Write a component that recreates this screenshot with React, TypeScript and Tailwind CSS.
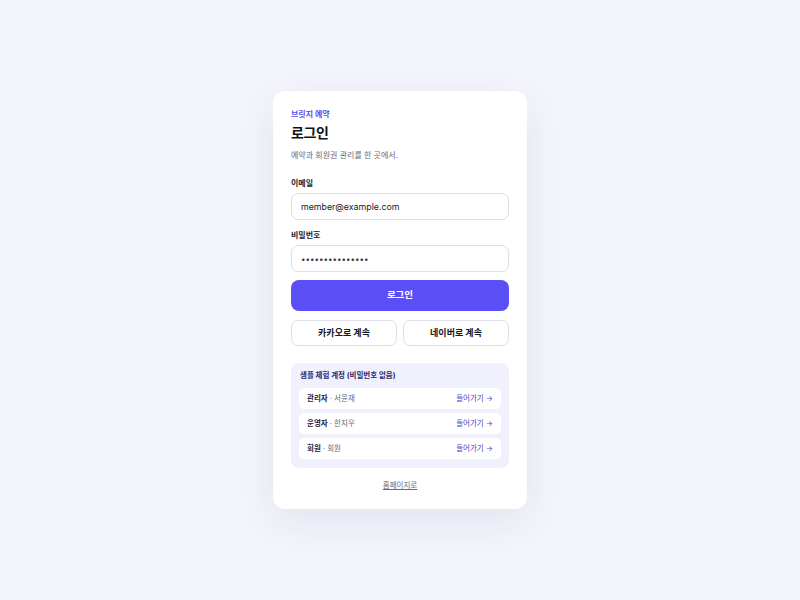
import { useState } from "react"

const font = { fontFamily: '"Inter", "Noto Sans CJK KR", sans-serif' }

const samples = [
  { role: "관리자", name: "서윤재" },
  { role: "운영자", name: "한지우" },
  { role: "회원", name: "회원" },
]

export default function App() {
  const [email, setEmail] = useState("member@example.com")
  const [password, setPassword] = useState("password1234567")

  return (
    <div className="min-h-screen w-full bg-[#f4f4fb] flex items-center justify-center" style={font}>
      <div className="w-[254px] bg-white rounded-[12px] shadow-[0_12px_40px_rgba(40,40,110,0.08)] px-[18px] pt-[18px] pb-[17px]">
        {/* Header */}
        <p className="text-[8px] leading-[11px] font-bold text-[#5b4ff0]">브릿지 예약</p>
        <h1 className="mt-[3px] text-[14px] leading-[20px] font-bold text-[#111118] tracking-tight">로그인</h1>
        <p className="mt-[6px] text-[8px] leading-[12px] text-[#6b6b78]">예약과 회원권 관리를 한 곳에서.</p>

        {/* Form */}
        <form className="mt-[16px] flex flex-col" onSubmit={(e) => e.preventDefault()}>
          <label className="text-[8px] leading-[12px] font-semibold text-[#222230]">이메일</label>
          <input
            type="email"
            value={email}
            onChange={(e) => setEmail(e.target.value)}
            className="mt-[4px] h-[27px] w-full rounded-[7px] border border-[#dedee8] bg-white px-[9px] text-[8.8px] text-[#1c1c24] outline-none"
          />
          <label className="mt-[9px] text-[8px] leading-[12px] font-semibold text-[#222230]">비밀번호</label>
          <input
            type="password"
            value={password}
            onChange={(e) => setPassword(e.target.value)}
            className="mt-[4px] h-[27px] w-full rounded-[7px] border border-[#dedee8] bg-white px-[9px] text-[8px] text-[#3a3a44] outline-none"
          />
          <button
            type="submit"
            className="mt-[8px] h-[31px] w-full rounded-[8px] bg-[#5a4ff4] text-[9.5px] font-bold text-white"
          >
            로그인
          </button>
          <div className="mt-[9px] grid grid-cols-2 gap-[6px]">
            <button type="button" className="h-[26px] rounded-[7px] border border-[#dedee8] bg-white text-[9px] font-bold text-[#16161e]">
              카카오로 계속
            </button>
            <button type="button" className="h-[26px] rounded-[7px] border border-[#dedee8] bg-white text-[9px] font-bold text-[#16161e]">
              네이버로 계속
            </button>
          </div>
        </form>

        {/* Sample accounts */}
        <div className="mt-[17px] rounded-[8px] bg-[#f1f0fd] px-[8px] pt-[7px] pb-[9px]">
          <p className="px-[1px] text-[7.5px] leading-[12px] font-bold text-[#2e2a6e]">샘플 체험 계정 (비밀번호 없음)</p>
          <div className="mt-[6px] flex flex-col gap-[4px]">
            {samples.map((s) => (
              <div key={s.role} className="h-[21px] flex items-center justify-between rounded-[5px] bg-white px-[8px] text-[7.5px]">
                <span className="text-[#6b6b78]">
                  <span className="font-bold text-[#1e1b4b]">{s.role}</span> · {s.name}
                </span>
                <span className="text-[#4a42c0]">들어가기 →</span>
              </div>
            ))}
          </div>
        </div>

        <div className="mt-[8px] text-center leading-[12px]">
          <a href="#" className="text-[7.5px] leading-[12px] text-[#6b6b78] underline">홈페이지로</a>
        </div>
      </div>
    </div>
  )
}
